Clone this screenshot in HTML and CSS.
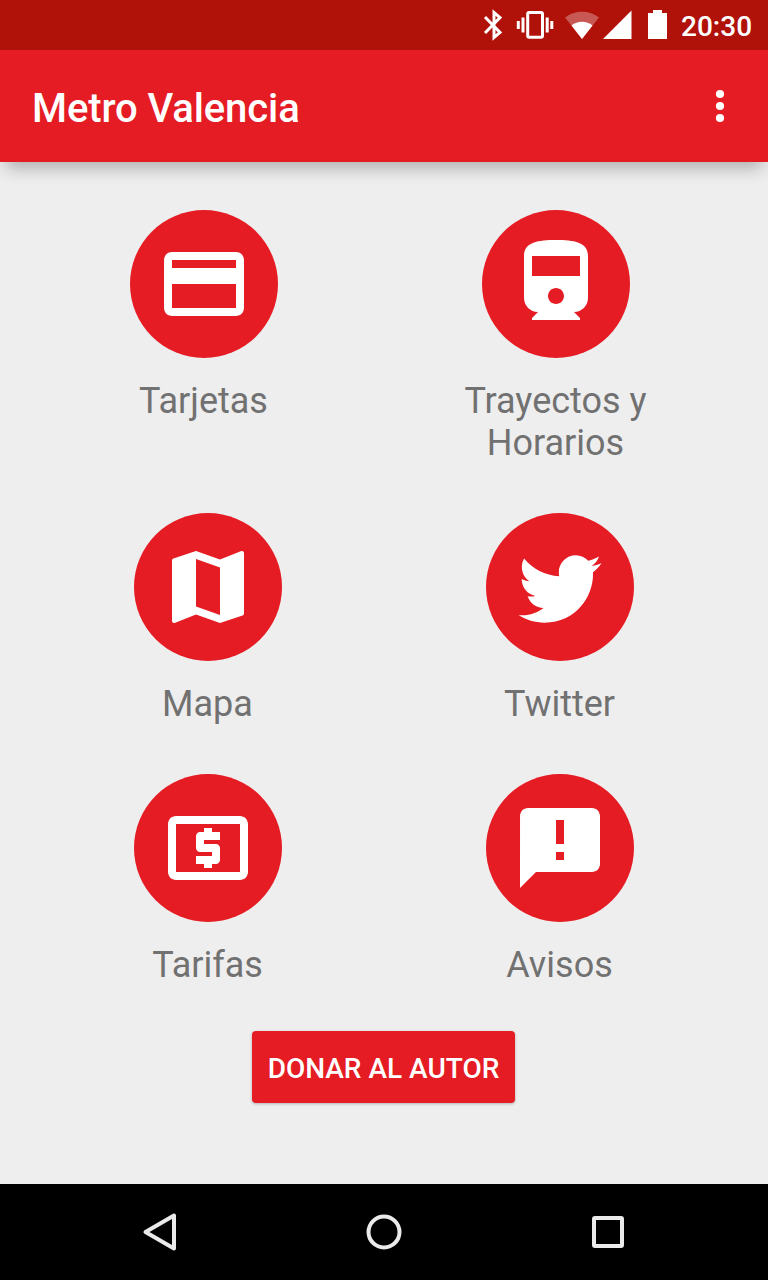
FILE: index.html
```
<!DOCTYPE html>
<html lang="es">
	<head>
		<meta charset="UTF-8">
		<meta name="viewport" content="width=device-width,initial-scale=1">
		<title>Metro Valencia</title>
		<link rel="stylesheet" href="styles.css">
	</head>
	<body>
		<div class="status">
			<svg class="status-icons" viewBox="0 0 200 50">
				<path class="line" d="M5 17l15 15.500-6 5V12.500l6 5L5 33"/>
				<rect class="line" x="47.700" y="12.600" width="14.800" height="24.600" rx="1.500"/>
				<path class="line" d="M43 17.500v15M38.300 21v8M67.200 17.500v15M71.800 21v8"/>
				<path class="faded" d="M102 39L85 17.500a28 28 0 0 1 34 0z"/>
				<path d="M102 39L91.500 25.500a17 17 0 0 1 21 0z"/>
				<path d="M123 39l28.500-28.500V39z"/>
				<path d="M168 39V13h5v-3h9v3h5v26z"/>
			</svg>
			<span class="clock">20:30</span>
		</div>
		<div class="toolbar">
			<h1>Metro Valencia</h1>
			<svg class="more" viewBox="0 0 24 48">
				<circle cx="12" cy="12" r="4.100"/>
				<circle cx="12" cy="24" r="4.100"/>
				<circle cx="12" cy="36" r="4.100"/>
			</svg>
		</div>
		<div class="main">
			<div class="row first">
				<div class="item">
					<div class="circle">
						<svg viewBox="0 0 24 24"><path d="M20 4H4c-1.110 0-1.990.890-1.990 2L2 18c0 1.110.890 2 2 2h16c1.110 0 2-.890 2-2V6c0-1.110-.890-2-2-2zm0 14H4v-6h16v6zm0-10H4V6h16v2z"/></svg>
					</div>
					<p>Tarjetas</p>
				</div>
				<div class="item">
					<div class="circle">
						<svg viewBox="0 0 24 24"><path d="M4 15.500C4 17.430 5.570 19 7.500 19L6 20.500v.500h12v-.500L16.500 19c1.930 0 3.500-1.570 3.500-3.500V5c0-3.500-3.580-4-8-4s-8 .500-8 4v10.500zm8 1.500c-1.100 0-2-.900-2-2s.900-2 2-2 2 .900 2 2-.900 2-2 2zm6-7H6V5h12v5z"/></svg>
					</div>
					<p>Trayectos y<br>Horarios</p>
				</div>
			</div>
			<div class="row">
				<div class="item">
					<div class="circle">
						<svg viewBox="0 0 24 24"><path d="M20.500 3l-.160.030L15 5.100 9 3 3.360 4.900c-.210.070-.360.250-.360.480V20.500c0 .280.220.500.500.500l.160-.030L9 18.900l6 2.100 5.640-1.900c.210-.070.360-.250.360-.480V3.500c0-.280-.220-.500-.500-.500zM15 19l-6-2.110V5l6 2.110V19z"/></svg>
					</div>
					<p>Mapa</p>
				</div>
				<div class="item">
					<div class="circle">
						<svg viewBox="-1.870 -2.450 27.750 27.750"><path d="M23.954 4.569c-.885.389-1.830.654-2.825.775 1.014-.611 1.794-1.574 2.163-2.723-.951.555-2.005.959-3.127 1.184-.896-.959-2.173-1.559-3.591-1.559-2.717 0-4.920 2.203-4.920 4.917 0 .390.045.765.127 1.124C7.691 8.094 4.066 6.130 1.640 3.161c-.427.722-.666 1.561-.666 2.475 0 1.710.870 3.213 2.188 4.096-.807-.026-1.566-.248-2.228-.616v.061c0 2.385 1.693 4.374 3.946 4.827-.413.111-.849.171-1.296.171-.314 0-.615-.030-.916-.086.631 1.953 2.445 3.377 4.604 3.417-1.680 1.319-3.809 2.105-6.102 2.105-.390 0-.779-.023-1.170-.067 2.189 1.394 4.768 2.209 7.557 2.209 9.054 0 13.999-7.496 13.999-13.986 0-.209 0-.420-.015-.630.961-.689 1.800-1.560 2.460-2.548z"/></svg>
					</div>
					<p>Twitter</p>
				</div>
			</div>
			<div class="row">
				<div class="item">
					<div class="circle">
						<svg viewBox="0 0 24 24"><path d="M11 17h2v-1h1c.550 0 1-.450 1-1v-3c0-.550-.450-1-1-1h-3v-1h4V8h-2V7h-2v1h-1c-.550 0-1 .450-1 1v3c0 .550.450 1 1 1h3v1H9v2h2v1zm9-13H4c-1.110 0-1.990.890-1.990 2L2 18c0 1.110.890 2 2 2h16c1.110 0 2-.890 2-2V6c0-1.110-.890-2-2-2zm0 14H4V6h16v12z"/></svg>
					</div>
					<p>Tarifas</p>
				</div>
				<div class="item">
					<div class="circle">
						<svg viewBox="0 0 24 24"><path d="M20 2H4c-1.100 0-1.990.900-1.990 2L2 22l4-4h14c1.100 0 2-.900 2-2V4c0-1.100-.900-2-2-2zm-7 13h-2v-2h2v2zm0-4h-2V5h2v6z"/></svg>
					</div>
					<p>Avisos</p>
				</div>
			</div>
			<button class="donate">DONAR AL AUTOR</button>
		</div>
		<div class="navbar">
			<svg viewBox="0 0 48 48"><path d="M38 7.500v33L9.500 24z"/></svg>
			<svg viewBox="0 0 48 48"><circle cx="24" cy="24" r="15.500"/></svg>
			<svg viewBox="0 0 48 48"><rect x="10" y="10" width="28" height="28" rx="1"/></svg>
		</div>
	</body>
</html>
```

FILE: styles.css
```
body{
	margin: 0;
	height: 1280px;
	display: flex;
	flex-direction: column;
	overflow: hidden;
	background: #eee;
	font-family: Roboto, sans-serif;
}
.status{
	height: 50px;
	display: flex;
	justify-content: flex-end;
	align-items: center;
	padding-right: 17px;
	box-sizing: border-box;
	background: #b01109;
	color: #fff;
}
.status-icons{
	width: 200px;
	height: 50px;
	margin-right: 1px;
	fill: #fff;
}
.status-icons .line{
	fill: none;
	stroke: #fff;
	stroke-width: 3;
}
.status-icons .faded{
	opacity: .3;
}
.clock{
	width: 70px;
	padding-top: 3px;
	font-size: 28px;
	font-weight: 500;
	line-height: 50px;
	white-space: nowrap;
}
.toolbar{
	height: 112px;
	display: flex;
	justify-content: space-between;
	align-items: center;
	padding: 0 36px 0 32px;
	box-sizing: border-box;
	background: #e51c23;
	box-shadow: 0 12px 16px -6px rgba(0,0,0,.27);
}
h1{
	margin: 6px 0 0;
	color: #fff;
	font-size: 40px;
	font-weight: 500;
	line-height: 48px;
	letter-spacing: -.1px;
}
.more{
	width: 24px;
	height: 48px;
	fill: #fff;
}
.main{
	flex: 1;
	display: flex;
	flex-direction: column;
	align-items: center;
	padding-top: 48px;
}
.row{
	width: 704px;
	display: flex;
	margin-bottom: 49px;
}
.row.first{
	margin-right: 8px;
}
.item{
	width: 352px;
	display: flex;
	flex-direction: column;
	align-items: center;
}
.circle{
	width: 148px;
	height: 148px;
	display: flex;
	align-items: center;
	justify-content: center;
	border-radius: 50%;
	background: #e51c23;
}
.circle svg{
	width: 96px;
	height: 96px;
	fill: #fff;
}
.item p{
	margin: 22px 1px 0 0;
	color: #717171;
	font-size: 36px;
	line-height: 42px;
	text-align: center;
}
.donate{
	width: 263px;
	height: 72px;
	margin: -4px 1px 0 0;
	padding: 2px 0 0;
	border: 0;
	border-radius: 4px;
	background: #e51c23;
	box-shadow: 0 1px 3px rgba(0,0,0,.25);
	color: #fff;
	font: 500 28px Roboto, sans-serif;
	white-space: nowrap;
}
.navbar{
	height: 96px;
	display: flex;
	justify-content: center;
	align-items: center;
	gap: 176px;
	background: #000;
}
.navbar svg{
	width: 48px;
	height: 48px;
	fill: none;
	stroke: #ebebeb;
	stroke-width: 4;
	stroke-linejoin: round;
}
```
